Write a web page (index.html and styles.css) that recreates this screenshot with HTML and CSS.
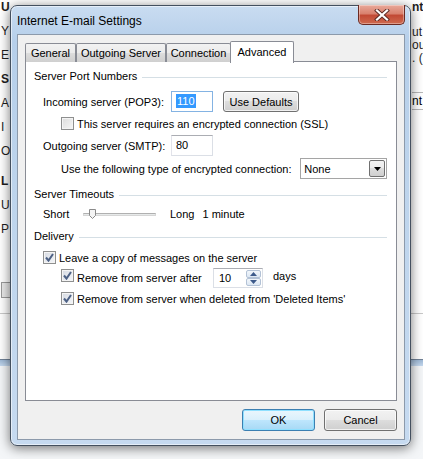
FILE: index.html
```html
<!DOCTYPE html>
<html lang="en">
<head>
    <meta charset="UTF-8">
    <title>Internet E-mail Settings</title>
    <link rel="stylesheet" href="styles.css">
</head>
<body>
    <div class="backdrop">
        <div class="bg-left">
            <div class="bg-text bold">U</div>
            <div class="bg-text">Y</div>
            <div class="bg-text">E</div>
            <div class="bg-text bold">S</div>
            <div class="bg-text">A</div>
            <div class="bg-text">I</div>
            <div class="bg-text">O</div>
            <div class="bg-text bold gap">L</div>
            <div class="bg-text">U</div>
            <div class="bg-text">P</div>
            <div class="bg-box"></div>
        </div>
        <div class="bg-right">
            <div class="bg-text bold">nt</div>
            <div class="bg-text">ut</div>
            <div class="bg-text">ou</div>
            <div class="bg-text">. (</div>
            <div class="bg-field">nt</div>
        </div>
        <div class="bg-bottom">
            <div class="bg-rule"></div>
            <div class="bg-frame"></div>
        </div>
    </div>

    <div class="dialog">
        <div class="titlebar">
            <span class="title">Internet E-mail Settings</span>
            <div class="close">
                <svg width="16" height="12" viewBox="0 0 16 12">
                    <path d="M3 1.5 L13 10.5 M13 1.5 L3 10.5" stroke="#5a2a24" stroke-width="4" stroke-linecap="square"/>
                    <path d="M3 1.5 L13 10.5 M13 1.5 L3 10.5" stroke="#fff" stroke-width="2.2" stroke-linecap="square"/>
                </svg>
            </div>
        </div>

        <div class="client">
            <div class="tabs">
                <div class="tab tab-general">General</div>
                <div class="tab tab-outgoing">Outgoing Server</div>
                <div class="tab tab-connection">Connection</div>
                <div class="tab tab-advanced active">Advanced</div>
            </div>

            <div class="panel">
                <div class="group first">
                    <span>Server Port Numbers</span>
                    <div class="rule"></div>
                </div>

                <div class="row row-incoming">
                    <label class="field-label">Incoming server (POP3):</label>
                    <div class="textbox focused"><span class="selected">110</span></div>
                    <button class="btn btn-defaults">Use Defaults</button>
                </div>

                <div class="row row-check indent-2 row-ssl">
                    <span class="checkbox"></span>
                    <span>This server requires an encrypted connection (SSL)</span>
                </div>

                <div class="row row-outgoing">
                    <label class="field-label">Outgoing server (SMTP):</label>
                    <div class="textbox">80</div>
                </div>

                <div class="row row-encrypt indent-2">
                    <label class="encrypt-label">Use the following type of encrypted connection:</label>
                    <div class="select">
                        <span>None</span>
                        <span class="select-btn">
                            <svg width="7" height="4" viewBox="0 0 7 4"><path d="M0 0 H7 L3.5 4 Z" fill="#000"/></svg>
                        </span>
                    </div>
                </div>

                <div class="group group-timeouts">
                    <span>Server Timeouts</span>
                    <div class="rule"></div>
                </div>

                <div class="row row-timeout">
                    <span class="short-label">Short</span>
                    <div class="slider">
                        <div class="track"></div>
                        <svg class="thumb" width="7" height="10" viewBox="0 0 7 10">
                            <path d="M0.5 0.5 H6.5 V6.5 L3.5 9.5 L0.5 6.5 Z" fill="#f4f4f4" stroke="#8a8a8a"/>
                        </svg>
                    </div>
                    <span class="long-label">Long</span>
                    <span>1 minute</span>
                </div>

                <div class="group group-delivery">
                    <span>Delivery</span>
                    <div class="rule"></div>
                </div>

                <div class="row row-check row-leave">
                    <span class="checkbox checked"></span>
                    <span>Leave a copy of messages on the server</span>
                </div>

                <div class="row row-remove indent-2">
                    <span class="checkbox checked"></span>
                    <span class="remove-label">Remove from server after</span>
                    <div class="spin">
                        <span class="spin-value">10</span>
                        <span class="spin-btns">
                            <span class="spin-btn up"><svg width="7" height="4" viewBox="0 0 7 4"><path d="M0 4 H7 L3.5 0 Z" fill="#3d5a8a"/></svg></span>
                            <span class="spin-btn down"><svg width="7" height="4" viewBox="0 0 7 4"><path d="M0 0 H7 L3.5 4 Z" fill="#3d5a8a"/></svg></span>
                        </span>
                    </div>
                    <span class="days">days</span>
                </div>

                <div class="row row-check indent-2 row-deleted">
                    <span class="checkbox checked"></span>
                    <span>Remove from server when deleted from 'Deleted Items'</span>
                </div>
            </div>

            <div class="actions">
                <button class="btn btn-action btn-ok">OK</button>
                <button class="btn btn-action">Cancel</button>
            </div>
        </div>
    </div>
</body>
</html>
```

FILE: styles.css
```css
* {
    margin: 0;
    padding: 0;
    box-sizing: border-box;
}

body {
    width: 423px;
    height: 459px;
    overflow: hidden;
    position: relative;
    background: #f4f6f8;
    font-family: 'Liberation Sans', Arial, sans-serif;
    font-size: 11px;
    color: #000;
}

/* window behind the dialog, only its edges show */
.backdrop {
    height: 366px;
    background: #fff;
    position: relative;
}

.bg-left {
    position: absolute;
    left: 1px;
    top: 0;
    width: 9px;
}

.bg-text {
    height: 24px;
    line-height: 14px;
    font-size: 12px;
    color: #1e1e1e;
    white-space: nowrap;
}

.bg-text.bold {
    font-weight: bold;
}

.bg-text.gap {
    margin-top: 6px;
}

.bg-box {
    margin-top: 36px;
    width: 9px;
    height: 16px;
    border: 1px solid #9a9a9a;
    border-right: none;
    background: #e9e9e9;
}

.bg-right {
    position: absolute;
    left: 412px;
    top: 0;
    width: 11px;
}

.bg-right .bg-text {
    height: 13px;
}

.bg-right .bg-text:nth-child(2) {
    margin-top: 12px;
}

.bg-field {
    margin-top: 28px;
    height: 18px;
    line-height: 16px;
    border-top: 1px solid #b8b8b8;
    border-bottom: 1px solid #b8b8b8;
    font-size: 12px;
    white-space: nowrap;
}

.bg-bottom {
    position: absolute;
    left: 0;
    right: 0;
    bottom: 0;
}

.bg-rule {
    height: 1px;
    background: #c9c9c9;
    margin-bottom: 45px;
}

.bg-frame {
    height: 7px;
    background: linear-gradient(#9fb9d6, #c4d8ee);
    border-top: 1px solid #6f8196;
}

/* dialog */
.dialog {
    position: absolute;
    left: 10px;
    top: 5px;
    width: 401px;
    height: 441px;
    border: 1px solid #44505f;
    border-radius: 7px;
    background: linear-gradient(180deg, #c9dcf1 0%, #b6cfea 8%, #bdd4ec 40%, #c6daf0 100%);
    box-shadow: 0 2px 12px rgba(0, 0, 0, 0.55), inset 0 0 0 1px rgba(255, 255, 255, 0.55);
}

.titlebar {
    height: 28px;
    position: relative;
    padding-left: 6px;
    display: flex;
    align-items: center;
}

.title {
    font-size: 12px;
    color: #000;
    margin-top: 2px;
}

.close {
    position: absolute;
    right: 5px;
    top: -1px;
    width: 47px;
    height: 20px;
    border: 1px solid #6b2a22;
    border-top: none;
    border-radius: 0 0 5px 5px;
    background: linear-gradient(180deg, #e9a99a 0%, #d9826f 45%, #c24a35 55%, #cf6a4f 100%);
    box-shadow: inset 0 0 0 1px rgba(255, 255, 255, 0.35);
    display: flex;
    align-items: center;
    justify-content: center;
}

.client {
    margin: 0 5px 0 6px;
    height: 406px;
    background: #f0f0f0;
    border: 1px solid #8c9aab;
    padding: 6px 7px 0 7px;
}

/* tabs */
.tabs {
    display: flex;
    align-items: flex-end;
    height: 21px;
    position: relative;
    z-index: 1;
}

.tab {
    height: 19px;
    border: 1px solid #898c95;
    border-bottom: none;
    border-radius: 2px 2px 0 0;
    background: linear-gradient(#f2f2f2 0%, #ebebeb 50%, #dddddd 51%, #cfcfcf 100%);
    text-align: center;
    line-height: 18px;
    white-space: nowrap;
}

.tab-general { width: 51px; }
.tab-outgoing { width: 90px; }
.tab-connection { width: 65px; }

.tab-advanced {
    width: 64px;
    margin-left: -1px;
    height: 22px;
    margin-bottom: -1px;
    background: #fff;
    line-height: 20px;
}

.panel {
    height: 340px;
    margin-top: -1px;
    background: #fff;
    border: 1px solid #898c95;
    padding: 0 9px 0 8px;
}

.group {
    display: flex;
    align-items: center;
    height: 14px;
    margin-top: 8px;
}

.group.first {
    margin-top: 7px;
}

.rule {
    flex: 1;
    height: 1px;
    background: #d5dfe5;
    margin-left: 5px;
    margin-top: 2px;
}

.row {
    display: flex;
    align-items: center;
    padding-left: 9px;
}

.indent-2 {
    padding-left: 27px;
}

.row-incoming {
    height: 21px;
    margin-top: 8px;
}

.field-label {
    width: 128px;
}

.textbox {
    width: 42px;
    height: 21px;
    border: 1px solid #dbdfe6;
    border-top-color: #abadb3;
    border-left-color: #e2e3ea;
    padding-left: 4px;
    line-height: 19px;
    background: #fff;
}

.textbox.focused {
    border-color: #84b3e3;
}

.selected {
    display: inline-block;
    background: #3399ff;
    color: #fff;
    line-height: 14px;
    padding: 0 1px;
}

.btn {
    font-family: inherit;
    font-size: 11px;
    color: #000;
    border: 1px solid #707070;
    border-radius: 3px;
    background: linear-gradient(#f2f2f2 0%, #ebebeb 49%, #dddddd 50%, #cfcfcf 100%);
    box-shadow: inset 0 0 0 1px rgba(255, 255, 255, 0.7);
}

.btn-defaults {
    margin-left: 10px;
    width: 76px;
    height: 21px;
}

.row-ssl {
    height: 13px;
    margin-top: 5px;
}

.row-check span + span {
    margin-left: 3px;
}

.checkbox {
    width: 13px;
    height: 13px;
    border: 1px solid #8e8f8f;
    background: linear-gradient(135deg, #dcdcdc, #f6f6f6);
    box-shadow: inset 0 0 0 1px #f4f4f4;
    flex-shrink: 0;
}

.checkbox.checked {
    background:
        url("data:image/svg+xml;utf8,<svg xmlns='http://www.w3.org/2000/svg' width='11' height='11'><path d='M2 5.5 L4.5 8.5 L9 2' fill='none' stroke='%234d6185' stroke-width='2'/></svg>") center / 11px 11px no-repeat,
        linear-gradient(135deg, #d6dae2, #f4f6f9);
}

.row-outgoing {
    height: 21px;
    margin-top: 5px;
}

.row-encrypt {
    height: 21px;
    margin-top: 2px;
}

.encrypt-label {
    width: 240px;
}

.select {
    width: 87px;
    height: 21px;
    border: 1px solid #a5a5a5;
    background: #fff;
    display: flex;
    align-items: center;
    justify-content: space-between;
    padding: 1px 1px 1px 3px;
}

.select-btn {
    width: 16px;
    height: 17px;
    border: 1px solid #707070;
    border-radius: 2px;
    background: linear-gradient(#f2f2f2 0%, #ebebeb 49%, #dddddd 50%, #cfcfcf 100%);
    display: flex;
    align-items: center;
    justify-content: center;
}

.group-timeouts {
    margin-top: 8px;
}

.row-timeout {
    height: 14px;
    margin-top: 6px;
}

.short-label {
    width: 40px;
}

.slider {
    width: 73px;
    height: 14px;
    position: relative;
    display: flex;
    align-items: center;
}

.track {
    width: 100%;
    height: 3px;
    background: #e7eaea;
    border: 1px solid #d6d6d6;
    border-top-color: #b0b0b0;
}

.thumb {
    position: absolute;
    left: 6px;
    top: 2px;
}

.long-label {
    margin-left: 14px;
    margin-right: 8px;
}

.group-delivery {
    margin-top: 8px;
}

.row-leave {
    height: 15px;
    margin-top: 7px;
}

.row-remove {
    height: 21px;
    margin-top: 2px;
}

.row-remove .checkbox {
    margin-top: -4px;
}

.remove-label {
    margin-left: 3px;
    width: 136px;
}

.spin {
    width: 50px;
    height: 20px;
    border: 1px solid #dbdfe6;
    border-top-color: #abadb3;
    display: flex;
    background: #fff;
}

.spin-value {
    flex: 1;
    padding-left: 5px;
    line-height: 19px;
}

.spin-btns {
    width: 16px;
    display: flex;
    flex-direction: column;
    padding: 1px 1px 1px 0;
}

.spin-btn {
    flex: 1;
    border: 1px solid #b3c2d6;
    border-radius: 2px;
    background: linear-gradient(#f2f6fb, #dde7f3);
    display: flex;
    align-items: center;
    justify-content: center;
}

.days {
    margin-left: 10px;
    margin-top: -3px;
}

.row-deleted {
    height: 15px;
    margin-top: 3px;
}

.actions {
    display: flex;
    justify-content: flex-end;
    gap: 9px;
    margin-top: 8px;
}

.btn-action {
    width: 73px;
    height: 22px;
}

.btn-ok {
    border-color: #3c7fb1;
    background: linear-gradient(#eaf6fd 0%, #d9f0fc 49%, #bee6fd 50%, #a7d9f5 100%);
    box-shadow: inset 0 0 0 1px #8fe0ff;
}
```
